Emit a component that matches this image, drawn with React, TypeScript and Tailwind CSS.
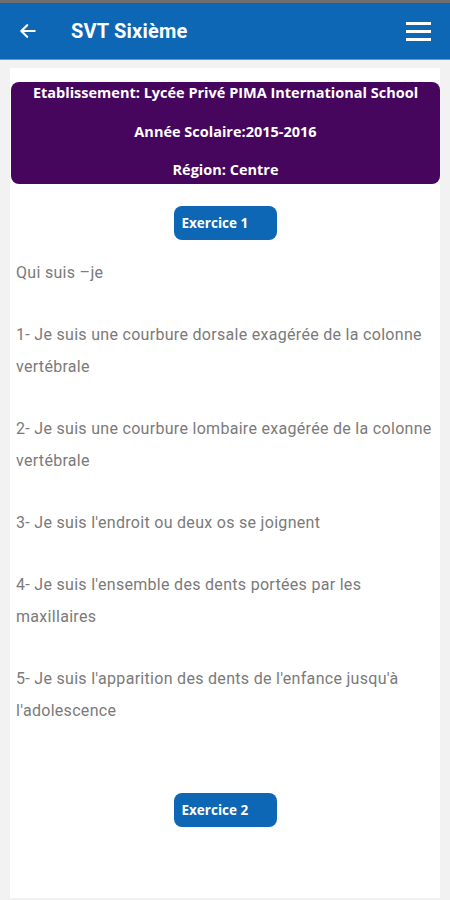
import React from 'react';

const questions = [
  "1- Je suis une courbure dorsale exagérée de la colonne vertébrale",
  "2- Je suis une courbure lombaire exagérée de la colonne vertébrale",
  "3- Je suis l'endroit ou deux os se joignent",
  "4- Je suis l'ensemble des dents portées par les maxillaires",
  "5- Je suis l'apparition des dents de l'enfance jusqu'à l'adolescence",
];

function ExoButton({ label }: { label: string }) {
  return (
    <div className="flex justify-center">
      <div className="w-[103px] h-[34px] rounded-[8px] bg-[#0d67b5] flex items-center pl-[8px] text-white text-[13.5px] font-bold font-['Open_Sans',sans-serif]">
        {label}
      </div>
    </div>
  );
}

export default function App() {
  return (
    <div className="w-[450px] h-[900px] overflow-hidden bg-[#f2f2f2] flex flex-col">
      <div className="h-[3px] bg-[#6e6e6e]" />
      {/* Toolbar */}
      <header className="h-[57px] bg-[#0d67b5] border-b border-[#5b9ad6] flex items-center px-[18px] text-white">
        <svg width="20" height="20" viewBox="0 0 24 24" fill="none" stroke="white" strokeWidth="2.6" strokeLinecap="round" strokeLinejoin="round">
          <path d="M20 12H5" />
          <path d="M11 5l-7 7 7 7" />
        </svg>
        <h1 className="ml-[33px] text-[20px] font-bold font-['Roboto',sans-serif] tracking-[0.2px]">SVT Sixième</h1>
        <div className="ml-auto flex flex-col gap-[5px] mr-[1px]">
          <span className="block w-[25px] h-[3px] bg-white" />
          <span className="block w-[25px] h-[3px] bg-white" />
          <span className="block w-[25px] h-[3px] bg-white" />
        </div>
      </header>

      {/* Content card */}
      <main className="mx-[10px] mt-[8px] flex-1 bg-white pt-[14px]">
        <div className="ml-[1px] rounded-[8px] bg-[#47065e] h-[102px] flex flex-col gap-[18.5px] pt-[1px] text-white text-[14.5px] font-bold text-center font-['Open_Sans',sans-serif]">
          <p className="leading-[20px]">Etablissement: Lycée Privé PIMA International School</p>
          <p className="leading-[20px]">Année Scolaire:2015-2016</p>
          <p className="leading-[20px]">Région: Centre</p>
        </div>

        <div className="mt-[22px]">
          <ExoButton label="Exercice 1" />
        </div>

        <div className="mt-[17px] pl-[6px] pr-[8px] text-[16px] tracking-[0.3px] leading-[32px] text-[#7a7a7a] font-['Roboto',sans-serif]">
          <p>Qui suis –je</p>
          {questions.map((q) => (
            <p key={q} className="mt-[30px]">{q}</p>
          ))}
        </div>

        <div className="mt-[66px]">
          <ExoButton label="Exercice 2" />
        </div>
      </main>
      <div className="h-[2px]" />
    </div>
  );
}
